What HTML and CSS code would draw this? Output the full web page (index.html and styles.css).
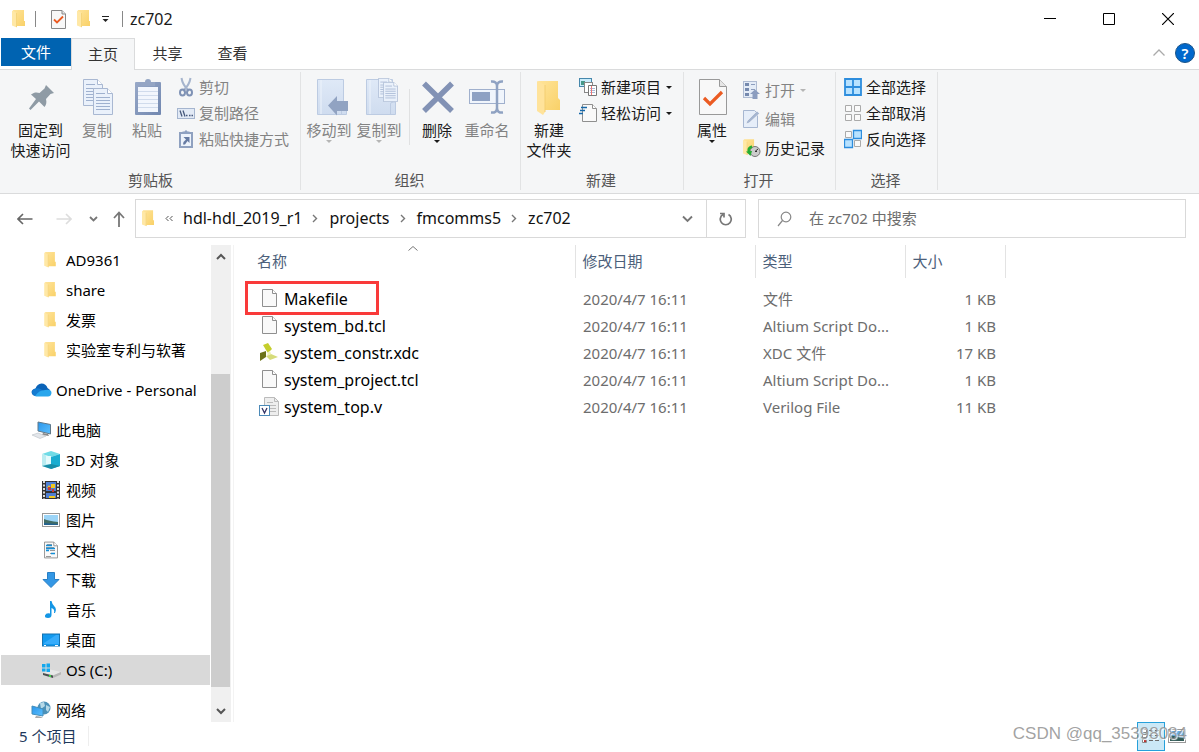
FILE: index.html
```html
<!DOCTYPE html>
<html lang="zh-CN">
<head>
<meta charset="utf-8">
<title>zc702</title>
<link rel="stylesheet" href="styles.css">
</head>
<body>
<svg class="defs" aria-hidden="true">
  <defs>
    <linearGradient id="gold" x1="0" y1="0" x2="1" y2="1"><stop offset="0" stop-color="#ffe49a"/><stop offset="1" stop-color="#f9d168"/></linearGradient>
    <linearGradient id="sky" x1="0" y1="0" x2="1" y2="1"><stop offset="0" stop-color="#2a95ea"/><stop offset="1" stop-color="#5cc0ff"/></linearGradient>
    <linearGradient id="pale" x1="0" y1="0" x2="0" y2="1"><stop offset="0" stop-color="#dfe9f7"/><stop offset="1" stop-color="#cfdcef"/></linearGradient>
    <linearGradient id="steel" x1="0" y1="0" x2="1" y2="1"><stop offset="0" stop-color="#98a9c8"/><stop offset="1" stop-color="#7187b0"/></linearGradient>
    <symbol id="folder" viewBox="0 0 13 18"><path d="M1 0H12V11H13V16H2Z" fill="url(#gold)"/><path d="M0 0.500L5 3V17.500L0 15.500Z" fill="#ffe8a6"/><path d="M4.500 3V17" stroke="#efc75f" stroke-width=".6"/></symbol>
    <symbol id="folder-large" viewBox="0 0 24 36"><path d="M1 1H21V18L23 20V30H8Z" fill="url(#gold)"/><path d="M0 1L8 5V32L6 35L0 31Z" fill="#ffe39b"/><path d="M8 5V32" stroke="#f3ce70"/></symbol>
    <symbol id="caret" viewBox="0 0 6 3"><path d="M0 0H6L3 3Z" fill="currentColor"/></symbol>
    <symbol id="doc" viewBox="0 0 15 18"><path d="M.5.500H10.500L14.500 4.500V17.500H.5Z" fill="#f9f9f9" stroke="#8f8f8f"/><path d="M10.500.500V4.500H14.500" fill="#fff" stroke="#8f8f8f"/></symbol>
    <symbol id="page" viewBox="0 0 20 27"><path d="M.5.500H14.500L19.500 5.500V26.500H.5Z" fill="#eaf1fb" stroke="#a9b8d2"/><path d="M14.500.500V5.500H19.500" fill="#fff" stroke="#a9b8d2"/><path d="M3 5.500H12M3 9.500H17M3 12.500H17M3 15.500H17M3 18.500H17M3 21.500H17" stroke="#9fb1cf"/></symbol>
    <symbol id="book" viewBox="0 0 30 36"><path d="M.5.500H26.500V23H29.500V35.500H.5Z" fill="url(#pale)" stroke="#bccbe2"/><path d="M4 1V35" stroke="#edf3fb"/><path d="M24.500 35.500V25Q24.500 23 27 23" fill="none" stroke="#bccbe2"/></symbol>
    <symbol id="check" viewBox="0 0 28 36"><path d="M.5.500H20.500L27.500 7.500V35.500H.5Z" fill="#f8f8f8" stroke="#999"/><path d="M20.500.500V7.500H27.500" fill="#e6e6e6" stroke="#999"/><path d="M5 19L11 25L23 13" fill="none" stroke="#eb5b22" stroke-width="3.200"/></symbol>
    <symbol id="check-small" viewBox="0 0 15 19"><path d="M.5.500H11L14.500 4V18.500H.5Z" fill="#f8f8f8" stroke="#888"/><path d="M11 .5V4H14.500" fill="#e6e6e6" stroke="#888"/><path d="M3 9.500L6 12.500L12 6.500" fill="none" stroke="#eb5b22" stroke-width="1.800"/></symbol>
    <symbol id="sep" viewBox="0 0 6 9"><path d="M1 1L4.500 4.500L1 8" fill="none" stroke="#777" stroke-width="1.400"/></symbol>
  </defs>
</svg>
<div class="window">
  <header class="titlebar">
    <svg class="icon title-folder" width="13" height="18"><use href="#folder"/></svg>
    <span class="divider"></span>
    <button class="plain quick-check" aria-label="属性"><svg class="icon" width="15" height="19"><use href="#check-small"/></svg></button>
    <button class="plain quick-folder" aria-label="新建文件夹"><svg class="icon" width="13" height="18"><use href="#folder"/></svg></button>
    <button class="plain quick-more" aria-label="自定义"><svg class="icon" width="7" height="7" viewBox="0 0 7 7"><path d="M0 .5H7" stroke="#222"/><path d="M.5 3H6.500L3.500 6Z" fill="#222"/></svg></button>
    <span class="divider title-divider"></span>
    <h1 class="title">zc702</h1>
    <div class="caption-buttons">
      <button class="plain" aria-label="最小化"><svg class="icon" width="12" height="12"><path d="M0 5.500H12" stroke="#000"/></svg></button>
      <button class="plain" aria-label="最大化"><svg class="icon" width="12" height="12"><path d="M.5.500H11.500V11.500H.5Z" stroke="#000" fill="none"/></svg></button>
      <button class="plain" aria-label="关闭"><svg class="icon" width="12" height="12"><path d="M0 0L12 12M12 0L0 12" stroke="#000" stroke-width="1.200"/></svg></button>
    </div>
  </header>
  <nav class="tabs">
    <button class="tab tab-file">文件</button>
    <button class="tab tab-active">主页</button>
    <button class="tab">共享</button>
    <button class="tab">查看</button>
    <div class="tabs-right">
      <button class="plain" aria-label="折叠功能区"><svg class="icon" width="12" height="7"><path d="M.5 6.500L6 1L11.500 6.500" fill="none" stroke="#aaa" stroke-width="1.300"/></svg></button>
      <button class="help" aria-label="帮助">?</button>
    </div>
  </nav>
  <section class="ribbon">
    <div class="group group-clip">
      <div class="tools">
        <button class="big big-wide"><svg class="icon" width="38" height="38" viewBox="0 0 38 38"><path d="M24 7L32 15L28.500 16L24 21C25 25 24 27 22.500 29L17 23.500L8.500 32L7 30.500L14 21L9 16.500C12 14 15 14 17.500 15L22.500 10.500Z" fill="#8f9ba5"/></svg><span>固定到<br>快速访问</span></button>
        <button class="big off"><svg class="icon" width="38" height="38" viewBox="0 0 38 38"><use href="#page" x="5" y="1" width="20" height="27"/><use href="#page" x="15" y="10" width="20" height="27"/></svg><span>复制</span></button>
        <button class="big off"><svg class="icon" width="38" height="38" viewBox="0 0 38 38"><rect x="7" y="4" width="26" height="33" rx="1" fill="url(#steel)"/><rect x="10" y="9" width="20" height="25" fill="#f2f6fd"/><path d="M10 13.500H30M10 17.500H30M10 21.500H30M10 25.500H30M10 29.500H30" stroke="#d0dbec"/><path d="M13 8V4H17Q17 1 20 1T23 4H27V8Z" fill="#94a5c4"/></svg><span>粘贴</span></button>
        <div class="rows">
          <button class="row off"><svg class="icon" width="18" height="20" viewBox="0 0 18 20"><path d="M4.500 1Q5.500 8 12 14M13.500 1Q12.500 8 6 14" fill="none" stroke="#a5b4cd" stroke-width="2"/><ellipse cx="5.500" cy="15.500" rx="2.500" ry="3" fill="none" stroke="#7f92b5" stroke-width="2"/><ellipse cx="12.500" cy="15.500" rx="2.500" ry="3" fill="none" stroke="#7f92b5" stroke-width="2"/></svg>剪切</button>
          <button class="row off"><svg class="icon" width="18" height="20" viewBox="0 0 18 20"><rect x=".5" y="5.500" width="17" height="10" fill="#e2eaf6" stroke="#a5b5cf"/><path d="M3 7.500L5 13.500M6 7.500L8 13.500" stroke="#46597d" stroke-width="1.300"/><path d="M9 12.500H10.500M12 12.500H13.500M14.500 12.500H16" stroke="#46597d" stroke-width="1.500"/></svg>复制路径</button>
          <button class="row off"><svg class="icon" width="18" height="20" viewBox="0 0 18 20"><rect x="3" y="4" width="12" height="14" fill="#edf3fb" stroke="#8fa1c0" stroke-width="2"/><path d="M5.500 5V2.500H7.500Q9 0 10.500 2.500H12.500V5Z" fill="#8fa2c2"/><path d="M6.500 8H12.500V14L10.500 12L8 15.500H6Q6.500 12 9 10.500Z" fill="#667ba3"/></svg>粘贴快捷方式</button>
        </div>
      </div>
      <div class="group-name">剪贴板</div>
    </div>
    <div class="group group-organize">
      <div class="tools">
        <button class="big off"><svg class="icon" width="38" height="38" viewBox="0 0 38 38"><use href="#book" x="7" y="1" width="30" height="36"/><path d="M18 27.500L27 18V23H38V33H27V37.500Z" fill="#91a3c2"/></svg><span>移动到</span><svg class="icon drop" width="6" height="3"><use href="#caret"/></svg></button>
        <button class="big off"><svg class="icon" width="38" height="38" viewBox="0 0 38 38"><use href="#book" x="6" y="1" width="30" height="36"/><use href="#page" x="18" y="0" width="15" height="20"/><use href="#page" x="23" y="4" width="15" height="20"/></svg><span>复制到</span><svg class="icon drop" width="6" height="3"><use href="#caret"/></svg></button>
        <span class="tool-split"></span>
        <button class="big"><svg class="icon" width="38" height="38" viewBox="0 0 38 38"><path d="M6 5.500L34 33M34 5.500L6 33" stroke="#8292b5" stroke-width="5.500"/></svg><span>删除</span><svg class="icon drop" width="6" height="3"><use href="#caret"/></svg></button>
        <button class="big off"><svg class="icon" width="38" height="38" viewBox="0 0 38 38"><rect x="1.500" y="11.500" width="35" height="14" fill="#f0f5fc" stroke="#a0b0cd"/><rect x="4" y="14" width="18" height="9" fill="#8ea1c3"/><path d="M23 3.500Q29 3 29 8Q29 3 35 3.500M29 7V31M23 34.500Q29 35 29 30Q29 35 35 34.500" fill="none" stroke="#8fa2c2" stroke-width="2.500"/></svg><span>重命名</span></button>
      </div>
      <div class="group-name">组织</div>
    </div>
    <div class="group group-new">
      <div class="tools">
        <button class="big"><svg class="icon" width="38" height="38" viewBox="0 0 38 38"><use href="#folder-large" x="7" y="2" width="24" height="36"/></svg><span>新建<br>文件夹</span></button>
        <div class="rows">
          <button class="row"><svg class="icon" width="18" height="20" viewBox="0 0 18 20"><rect x=".5" y="1.500" width="12" height="8" fill="#c9ecfb" stroke="#4687ac"/><rect x="2" y="4" width="4" height="4" fill="#459889"/><rect x="5.500" y="5.500" width="8" height="10" fill="#fff" stroke="#888"/><path d="M9.500 8.500H17.500V18.500H9.500Z" fill="#fff" stroke="#777"/><path d="M11 11.500H16M11 13.500H16M11 15.500H16" stroke="#aab9d6"/><path d="M12.500 9V18" stroke="#e77"/></svg>新建项目<svg class="icon row-drop" width="6" height="3"><use href="#caret"/></svg></button>
          <button class="row"><svg class="icon" width="18" height="20" viewBox="0 0 18 20"><use href="#doc" x="3" y="1" width="15" height="18"/><path d="M2 4.500H8M1 7.500H6M0 10.500H4" stroke="#1768a9" stroke-width="1.300"/></svg>轻松访问<svg class="icon row-drop" width="6" height="3"><use href="#caret"/></svg></button>
        </div>
      </div>
      <div class="group-name">新建</div>
    </div>
    <div class="group group-open">
      <div class="tools">
        <button class="big"><svg class="icon" width="38" height="38" viewBox="0 0 38 38"><use href="#check" x="6" y="1" width="28" height="36"/></svg><span>属性</span><svg class="icon drop" width="6" height="3"><use href="#caret"/></svg></button>
        <div class="rows rows-loose">
          <button class="row off"><svg class="icon" width="18" height="20" viewBox="0 0 18 20"><rect x=".5" y="1.500" width="13" height="16" fill="#e4ecf7" stroke="#aebbd2"/><path d="M2 3H6V6H2ZM2 8H6V11H2ZM2 13H6V16H2Z" fill="#7589ae"/><path d="M8 4.500H12M8 9.500H12" stroke="#8c9dbd"/><path d="M12 9.500L17 14H14.500V19H9.500V14H7Z" fill="#8b9dbf"/></svg>打开<svg class="icon row-drop" width="6" height="3"><use href="#caret"/></svg></button>
          <button class="row off"><svg class="icon" width="18" height="20" viewBox="0 0 18 20"><path d="M.5 1.500H11.500L14.500 4.500V18.500H.5Z" fill="#e6eef9" stroke="#a7b7d1"/><path d="M3 15L4 12L14 2L16.500 4.500L6 14Z" fill="#a6b6d0" stroke="#fff" stroke-width=".5"/></svg>编辑</button>
          <button class="row"><svg class="icon" width="18" height="20" viewBox="0 0 18 20"><use href="#folder" x="0" y="1" width="12" height="17"/><circle cx="12" cy="13.500" r="5" fill="#ccc" stroke="#777"/><path d="M12 13.500L15 11M12 13.500H14" stroke="#333" fill="none"/><path d="M9 8.500Q4.500 10 6 14.500" stroke="#24ad32" stroke-width="2.500" fill="none"/><path d="M3 13.500L9 13L7.500 18Z" fill="#24ad32"/></svg>历史记录</button>
        </div>
      </div>
      <div class="group-name">打开</div>
    </div>
    <div class="group group-select">
      <div class="tools">
        <div class="rows">
          <button class="row"><svg class="icon" width="18" height="20" viewBox="0 0 18 20"><path d="M1 2H17V18H1ZM9 2V18M1 10H17" fill="#b8e2ff" stroke="#2d8ddd" stroke-width="1.800"/></svg>全部选择</button>
          <button class="row"><svg class="icon" width="18" height="20" viewBox="0 0 18 20"><path d="M1.500 2.500H7.500V8.500H1.500ZM10.500 2.500H16.500V8.500H10.500ZM1.500 11.500H7.500V17.500H1.500ZM10.500 11.500H16.500V17.500H10.500Z" fill="#fafafa" stroke="#aaa"/></svg>全部取消</button>
          <button class="row"><svg class="icon" width="18" height="20" viewBox="0 0 18 20"><path d="M1.500 2.500H7.500V8.500H1.500ZM10.500 11.500H16.500V17.500H10.500Z" fill="#fafafa" stroke="#aaa"/><path d="M9.500 1.500H17.500V9.500H9.500ZM.5 10.500H8.500V18.500H.5Z" fill="#b8e2ff" stroke="#2d8ddd" stroke-width="1.300"/></svg>反向选择</button>
        </div>
      </div>
      <div class="group-name">选择</div>
    </div>
  </section>
  <div class="location">
    <div class="history">
      <button class="plain" aria-label="后退"><svg class="icon" width="16" height="12"><path d="M15.500 6H1M6 1L1 6L6 11" fill="none" stroke="#666" stroke-width="1.600"/></svg></button>
      <button class="plain" aria-label="前进"><svg class="icon" width="16" height="12"><path d="M.5 6H15M10 1L15 6L10 11" fill="none" stroke="#ddd" stroke-width="1.600"/></svg></button>
      <button class="plain recent" aria-label="最近位置"><svg class="icon" width="9" height="6"><path d="M1 1L4.500 4.500L8 1" fill="none" stroke="#777" stroke-width="1.800"/></svg></button>
      <button class="plain up" aria-label="上移"><svg class="icon" width="12" height="16"><path d="M6 16V1.500M1 7L6 1.500L11 7" fill="none" stroke="#777" stroke-width="1.800"/></svg></button>
    </div>
    <div class="address">
      <svg class="icon" width="12" height="17"><use href="#folder"/></svg>
      <svg class="icon crumb-more" width="8" height="7"><path d="M3.500 1L1 3.500L3.500 6M7.500 1L5 3.500L7.500 6" fill="none" stroke="#555"/></svg>
      <a class="crumb" href="#">hdl-hdl_2019_r1</a>
      <svg class="icon crumb-sep" width="6" height="9"><use href="#sep"/></svg>
      <a class="crumb" href="#">projects</a>
      <svg class="icon crumb-sep" width="6" height="9"><use href="#sep"/></svg>
      <a class="crumb" href="#">fmcomms5</a>
      <svg class="icon crumb-sep" width="6" height="9"><use href="#sep"/></svg>
      <a class="crumb" href="#">zc702</a>
      <button class="plain address-drop" aria-label="历史地址"><svg class="icon" width="11" height="8"><path d="M1 1.500L5.500 6L10 1.500" fill="none" stroke="#777" stroke-width="1.900"/></svg></button>
      <button class="plain refresh" aria-label="刷新"><svg class="icon" width="14" height="16" viewBox="0 0 14 16"><path d="M9.500 3.500A5.500 5.500 0 1 1 4 3.500M1 2.500H5V6.500" fill="none" stroke="#777" stroke-width="1.700"/></svg></button>
    </div>
    <label class="search">
      <svg class="icon" width="15" height="16"><circle cx="9" cy="6" r="4.800" fill="none" stroke="#888" stroke-width="1.200"/><path d="M5.500 9.500L1 15" stroke="#888" stroke-width="1.200"/></svg>
      <input class="search-box" type="text" placeholder="在 zc702 中搜索" aria-label="在 zc702 中搜索">
    </label>
  </div>
  <main class="content">
    <nav class="tree">
      <div class="branch">
        <a class="node sub" href="#"><svg class="icon" width="18" height="18"><use href="#folder" x="2" y="1" width="12" height="16"/></svg>AD9361</a>
        <a class="node sub" href="#"><svg class="icon" width="18" height="18"><use href="#folder" x="2" y="1" width="12" height="16"/></svg>share</a>
        <a class="node sub" href="#"><svg class="icon" width="18" height="18"><use href="#folder" x="2" y="1" width="12" height="16"/></svg>发票</a>
        <a class="node sub" href="#"><svg class="icon" width="18" height="18"><use href="#folder" x="2" y="1" width="12" height="16"/></svg>实验室专利与软著</a>
      </div>
      <div class="branch">
        <a class="node" href="#"><svg class="icon" width="21" height="18" viewBox="0 0 21 18"><path d="M5 15Q1 15 .5 11Q1 8 4.500 7.500Q6 3 10.500 2.500Q15 2.500 16.500 7L19 9L17 14Z" fill="#0b63b8"/><path d="M1 12Q1 8 5 7.500Q8 6.500 11 9L17 13L7 15Q2 15 1 12Z" fill="#147bd1"/><path d="M4 15Q8 9 14 9Q20.500 8 20.500 12Q20 15.500 17 15.500H6Q5 15.500 4 15Z" fill="#29a6ec"/></svg>OneDrive - Personal</a>
      </div>
      <div class="branch">
        <a class="node" href="#"><svg class="icon" width="21" height="18" viewBox="0 0 21 18"><path d="M7 1L19.500 3.500V13L7 10Z" fill="url(#sky)" stroke="#607889"/><path d="M12 12L11 14L18 15L17 13Z" fill="#888"/><path d="M1 14L7 12L15 15L9 17.500Z" fill="#e3e6ea" stroke="#b8bfc6" stroke-width=".6"/></svg>此电脑</a>
        <a class="node sub" href="#"><svg class="icon" width="18" height="18" viewBox="0 0 18 18"><path d="M9 0L18 3L9 6L0 3Z" fill="#6fdbe6"/><path d="M0 3L9 6V18L0 15Z" fill="#b9ecf1"/><path d="M4 5H9V13H4Z" fill="#e4fafc"/><path d="M9 6L18 3V15L9 18Z" fill="#19acd0"/><path d="M9 13L18 15L9 18L0 15Z" fill="#178da8"/></svg>3D 对象</a>
        <a class="node sub" href="#"><svg class="icon" width="18" height="18" viewBox="0 0 18 18"><path d="M0 0H18V18H0Z" fill="#333"/><path d="M2 0V18M16 0V18" stroke="#ddd" stroke-width="2" stroke-dasharray="2 1.500"/><path d="M4 1H14V10H4ZM4 12H14V17H4Z" fill="#4f7fd3"/><path d="M5 7L7 4L9 7ZM9 3H13V7H9ZM7 15H13V17H7Z" fill="#efc71f"/><path d="M6 6H9V9H6ZM10 8H12V11H10Z" fill="#ca3937"/></svg>视频</a>
        <a class="node sub" href="#"><svg class="icon" width="18" height="18" viewBox="0 0 18 18"><rect x=".5" y="2.500" width="17" height="13" fill="#fff" stroke="#999"/><rect x="2" y="4" width="14" height="10" fill="#9bd4f7"/><path d="M2 8Q7 10 16 11V14H2Z" fill="#426d66"/><path d="M2 12L16 13V14H2Z" fill="#246391"/></svg>图片</a>
        <a class="node sub" href="#"><svg class="icon" width="18" height="18" viewBox="0 0 18 18"><use href="#doc" x="2" y="0" width="14" height="18"/><path d="M5 3.500H10M4 6.500H12M8 9.500H13M8 12.500H13M4 15.500H9" stroke="#999"/><path d="M4 4.500H10M4 7.500H13M4 9.500H7M9 12.500H13" stroke="#138ed8" stroke-width="1.300"/></svg>文档</a>
        <a class="node sub" href="#"><svg class="icon" width="18" height="18" viewBox="0 0 18 18"><path d="M5.500 1.500H12.500V8.500H17L9 16.500L1 8.500H5.500Z" fill="#3397e5" stroke="#287fc5"/></svg>下载</a>
        <a class="node sub" href="#"><svg class="icon" width="18" height="18" viewBox="0 0 18 18"><path d="M8 0H9.500Q10 3 12.500 5.500Q15 8 13 12H12Q13 8 9.500 7V14Q9.500 17 6 17T3 14.500Q4 11.500 8 12.500Z" fill="#1496e5"/></svg>音乐</a>
        <a class="node sub" href="#"><svg class="icon" width="18" height="18" viewBox="0 0 18 18"><rect x=".5" y="3" width="17" height="12" fill="#139aef" stroke="#1473b2"/><path d="M2 12L14 4H17V13H2Z" fill="#37acfb"/><path d="M2 14.500H4M13 14.500H16" stroke="#fff"/></svg>桌面</a>
        <a class="node sub selected" href="#"><svg class="icon" width="20" height="18" viewBox="0 0 20 18"><path d="M1 12L8 8.500L19 11L12 14Z" fill="#e8e8e8"/><path d="M1 12L11 14.500V17L1 14Z" fill="#4b5050"/><path d="M11 14.500L19 11V13.500L11 17Z" fill="#b7b7b7"/><path d="M0 3H3.500V6.500H0ZM4.500 2.500H8V6.500H4.500ZM0 7.500H3.500V10.500H0ZM4.500 7.500H8V11H4.500Z" fill="#13a8ee"/><path d="M7 14H9V16H7Z" fill="#40d64b"/></svg>OS (C:)</a>
      </div>
      <div class="branch">
        <a class="node" href="#"><svg class="icon" width="21" height="18" viewBox="0 0 21 18"><circle cx="13" cy="7" r="6.500" fill="#4c91b8"/><path d="M9 2L13 1L14 5L10 8ZM15 4L19 6L17 11L15 9Z" fill="#b5d9e8"/><path d="M1 5L12 8V15L1 13Z" fill="url(#sky)" stroke="#438ebb"/><path d="M5 15L9 15.500L12 17L4 17Z" fill="#aaa"/></svg>网络</a>
      </div>
    </nav>
    <div class="scrollbar">
      <button class="scroll-up" aria-label="向上滚动"><svg class="icon" width="10" height="7"><path d="M1 6L5 2L9 6" fill="none" stroke="#555" stroke-width="2"/></svg></button>
      <div class="scroll-space"></div>
      <div class="scroll-thumb"></div>
      <button class="scroll-down" aria-label="向下滚动"><svg class="icon" width="10" height="7"><path d="M1 1L5 5L9 1" fill="none" stroke="#555" stroke-width="2"/></svg></button>
    </div>
    <section class="files">
      <table class="file-table">
        <thead>
          <tr><th class="col-name">名称<svg class="icon sort" width="10" height="5"><path d="M.5 4.500L5 .5L9.500 4.500" fill="none" stroke="#777"/></svg></th><th class="col-date">修改日期</th><th class="col-type">类型</th><th class="col-size">大小</th></tr>
        </thead>
        <tbody>
          <tr><td><div class="file marked"><svg class="icon" width="20" height="20"><use href="#doc" x="3" y="0" width="15" height="18"/></svg>Makefile</div></td><td>2020/4/7 16:11</td><td>文件</td><td>1 KB</td></tr>
          <tr><td><div class="file"><svg class="icon" width="20" height="20"><use href="#doc" x="3" y="0" width="15" height="18"/></svg>system_bd.tcl</div></td><td>2020/4/7 16:11</td><td>Altium Script Do...</td><td>1 KB</td></tr>
          <tr><td><div class="file"><svg class="icon" width="20" height="20" viewBox="0 0 20 20"><path d="M4 2L9 0L13 6L9 10L7 7Z" fill="#c5ce2c"/><path d="M1 10L7 8V14L1 18Z" fill="#6d7318"/><path d="M7 13L12 11L19 14L11 17Z" fill="#d6dc7a"/><path d="M9 9L11 8L12 11L8 13Z" fill="#eef0b5"/></svg>system_constr.xdc</div></td><td>2020/4/7 16:11</td><td>XDC <span class="cjk">文件</span></td><td>17 KB</td></tr>
          <tr><td><div class="file"><svg class="icon" width="20" height="20"><use href="#doc" x="3" y="0" width="15" height="18"/></svg>system_project.tcl</div></td><td>2020/4/7 16:11</td><td>Altium Script Do...</td><td>1 KB</td></tr>
          <tr><td><div class="file"><svg class="icon" width="20" height="20" viewBox="0 0 20 20"><path d="M5.500.500H15.500L19.500 4.500V18.500H5.500Z" fill="#eee" stroke="#bbb"/><path d="M15.500.500V4.500H19.500M8 5.500H14M8 8.500H17M11 11.500H17M11 14.500H17" fill="none" stroke="#bbb"/><rect x=".5" y="8.500" width="10" height="10" fill="#fff" stroke="#4c8ab8"/><path d="M3 11L5.500 16L8 11" fill="none" stroke="#336" stroke-width="1.300"/></svg>system_top.v</div></td><td>2020/4/7 16:11</td><td>Verilog File</td><td>11 KB</td></tr>
        </tbody>
      </table>
    </section>
  </main>
  <footer class="status">
    <span class="count">5 个项目</span>
    <div class="views">
      <button class="view view-on" aria-label="详细信息"><svg class="icon" width="18" height="14" viewBox="0 0 18 14"><path d="M.5.500H4.500V3.500H.5ZM.5 5.500H4.500V8.500H.5ZM.5 10.500H4.500V13.500H.5Z" fill="#fff" stroke="#888"/><path d="M7 1.500H11M13 1.500H17M7 6.500H11M13 6.500H17M7 11.500H11M13 11.500H17" stroke="#666"/><path d="M2 11H4V13H2Z" fill="#b33"/></svg></button>
      <button class="view" aria-label="大图标"><svg class="icon" width="18" height="14" viewBox="0 0 18 14"><rect x=".5" y=".5" width="17" height="13" fill="#fff" stroke="#999"/><path d="M2 2H16V12H2Z" fill="#63a9e6"/><path d="M2 6Q8 8 16 9V12H2Z" fill="#335b57"/></svg></button>
    </div>
    <span class="watermark">CSDN @qq_35398084</span>
  </footer>
</div>
</body>
</html>
```
FILE: styles.css
```css
*, *::before, *::after { box-sizing: border-box; }
body {
  margin: 0;
  background: #fff;
  color: #1a1a1a;
  font: 15px/20px "Noto Sans", "Noto Sans CJK SC", sans-serif;
}
button, input { font: inherit; color: inherit; }
button { padding: 0; border: 0; background: none; }
a { color: inherit; text-decoration: none; }
.defs { position: absolute; width: 0; height: 0; }
.icon { display: block; flex: none; }
.window { display: flex; flex-direction: column; height: 100vh; overflow: hidden; }
.plain { display: flex; align-items: center; justify-content: center; }

.titlebar { display: flex; flex: none; align-items: center; height: 38px; padding: 0 2px 0 12px; }
.divider { width: 1px; height: 16px; margin-left: 10px; background: #888; }
.quick-check { margin-left: 15px; }
.quick-folder { margin-left: 11px; }
.quick-more { margin-left: 12px; }
.title-divider { margin-left: 13px; }
.title { margin: 0 0 0 7px; font-size: 16px; font-weight: 400; }
.caption-buttons { display: flex; height: 100%; margin-left: auto; }
.caption-buttons .plain { width: 59px; }

.tabs { display: flex; flex: none; height: 32px; padding-left: 1px; border-bottom: 1px solid #dadbdc; }
.tab { width: 65px; height: 31px; padding-bottom: 2px; color: #333; }
.tab-file { width: 70px; height: 28px; padding-bottom: 0; background: #0063b1; color: #fff; }
.tab-active { height: 32px; background: #f5f6f7; border: 1px solid #dadbdc; border-bottom: 0; width: 64px; }
.tabs-right { display: flex; align-items: center; gap: 10px; margin-left: auto; padding: 0 4px 2px 0; }
.help { width: 20px; height: 20px; border: 1px solid #1d5588; border-radius: 50%; background: #0068cc; color: #fff; font-weight: 600; line-height: 18px; }

.ribbon { display: flex; flex: none; height: 124px; padding: 2px 0 3px 1px; background: #f5f6f7; border-bottom: 1px solid #dadbdc; }
.group { display: flex; flex-direction: column; justify-content: space-between; padding-left: 3px; border-right: 1px solid #e2e3e4; }
.group-clip { width: 300px; padding-left: 8px; }
.group-organize { width: 220px; }
.group-new { width: 163px; }
.group-open { width: 152px; }
.group-select { width: 102px; }
.tools { display: flex; padding-top: 5px; }
.group-name { margin-left: -5px; color: #555; text-align: center; }
.group-clip .group-name { margin-left: -8px; }
.big { display: flex; flex-direction: column; align-items: center; width: 50px; padding-top: 1px; white-space: nowrap; }
.big > span { margin-top: 4px; }
.big-wide { width: 63px; }
.off { color: #838383; }
.off .drop, .off .row-drop { color: #b5b5b5; }
.tool-split { width: 1px; height: 56px; margin: 12px 2px 0 5px; background: #e0e1e2; }
.rows { display: flex; flex-direction: column; gap: 6px; padding-left: 5px; }
.rows-loose { gap: 9px; padding: 3px 0 0 6px; }
.row { display: flex; align-items: center; gap: 4px; height: 20px; white-space: nowrap; }
.row-drop { margin-left: 1px; }

.location { display: flex; flex: none; align-items: center; height: 51px; padding: 0 13px 2px 0; }
.history { display: flex; flex: none; align-items: center; width: 135px; padding-left: 17px; gap: 23px; }
.recent { margin-left: -6px; }
.up { margin-left: -8px; }
.address { display: flex; flex: 603; align-items: center; height: 39px; padding-left: 6px; border: 1px solid #d9d9d9; }
.crumb-more { margin: 0 10px 0 11px; }
.crumb { padding-bottom: 2px; color: #111; font-size: 16px; white-space: nowrap; }
.crumb-sep { margin: 0 11px 0 10px; }
.address-drop { width: 37px; height: 100%; margin-left: auto; }
.refresh { width: 39px; height: 100%; border-left: 1px solid #d9d9d9; }
.search { display: flex; flex: 408; align-items: center; gap: 17px; height: 39px; margin-left: 12px; padding-left: 18px; border: 1px solid #d9d9d9; }
.search-box { flex: 1; min-width: 0; padding: 0 0 2px; border: 0; outline: 0; background: none; }
.search-box::placeholder { color: #6d6d6d; opacity: 1; }

.content { display: flex; flex: 1; min-height: 0; }
.tree { display: flex; flex: none; flex-direction: column; gap: 10px; width: 211px; overflow: hidden; padding-left: 1px; border-right: 1px solid #fff; }
.node { display: flex; align-items: center; gap: 4px; height: 30px; padding-left: 30px; color: #000; white-space: nowrap; }
.node.sub { gap: 6px; padding-left: 41px; }
.node.selected { gap: 4px; background: #d9d9d9; }
.scrollbar { display: flex; flex: none; flex-direction: column; width: 20px; background: #f0f0f0; }
.scroll-up, .scroll-down { display: flex; flex: none; align-items: center; justify-content: center; height: 23px; }
.scroll-down { height: 35px; padding-top: 13px; }
.scroll-space { flex: 106; }
.scroll-thumb { flex: 313; margin-right: 1px; background: #cdcdcd; }
.files { flex: 1; margin-left: 2px; border-left: 1px solid #f3f3f3; }

.file-table { table-layout: fixed; width: 771px; border-collapse: collapse; color: #6d6d6d; }
.file-table th { height: 33px; padding: 0 0 2px 7px; border-right: 1px solid #e3e3e3; color: #4c607a; font-weight: 400; text-align: left; }
.file-table .col-name { position: relative; width: 341px; padding-left: 23px; }
.col-date { width: 180px; }
.col-type { width: 150px; }
.col-size { width: 100px; }
.sort { position: absolute; top: 1px; left: 174px; }
.file-table tbody::before { content: ""; display: block; height: 7px; }
.file-table td { height: 27px; padding: 0 0 0 8px; white-space: nowrap; }
.file-table td:first-child { padding-left: 25px; }
.file-table td:last-child { padding-right: 9px; text-align: right; }
.file { display: flex; position: relative; align-items: center; gap: 5px; color: #000; font-size: 16px; }
.marked::after { content: ""; position: absolute; top: -8px; left: -14px; width: 134px; height: 34px; border: 3px solid #f93a3a; }

.status { display: flex; position: relative; flex: none; align-items: center; height: 30px; padding: 0 10px 2px 19px; color: #1e395b; }
.count { padding-right: 12px; border-right: 1px solid #eee; }
.views { display: flex; align-items: center; margin-left: auto; }
.view { display: flex; align-items: center; justify-content: center; width: 24px; height: 29px; }
.view-on { width: 28px; border: 1px solid #26a0da; background: #cbe8f6; }
.watermark { position: absolute; top: 2px; right: 12px; color: #8a8a8acc; font: 17px/20px "Liberation Sans", sans-serif; text-shadow: 1px 1px 1px #fff; }
```
